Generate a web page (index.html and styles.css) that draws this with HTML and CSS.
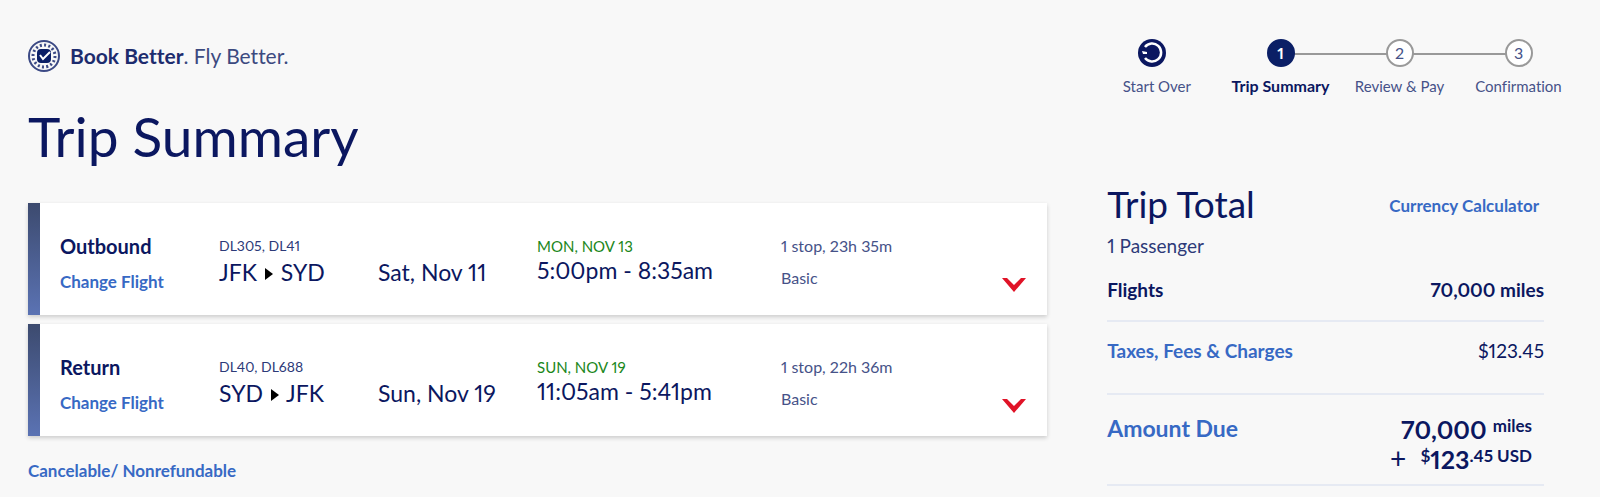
FILE: index.html
```html
<!DOCTYPE html>
<html lang="en">
<head>
    <meta charset="UTF-8">
    <meta name="viewport" content="width=device-width, initial-scale=1.0">
    <title>Trip Summary</title>
    <link rel="stylesheet" href="styles.css">
</head>
<body>
    <header class="top-bar">
        <div class="brand">
            <svg class="brand-icon" viewBox="0 0 32 32" aria-hidden="true">
                <circle cx="16" cy="16" r="15" fill="none" stroke="#3c4a85" stroke-width="2"/>
                <circle cx="16" cy="16" r="11" fill="none" stroke="#3c4a85" stroke-width="3" stroke-dasharray="2 2.3"/>
                <rect x="9" y="9" width="14" height="14" rx="4" fill="#0b1f66"/>
                <path d="M12 15l3 4 7-7" fill="none" stroke="#fff" stroke-width="2"/>
            </svg>
            <p class="brand-text"><b>Book Better</b>. Fly Better.</p>
        </div>

        <nav class="progress">
            <button class="start-over" type="button">
                <svg class="restart-icon" viewBox="0 0 28 28" aria-hidden="true">
                    <circle cx="14" cy="14" r="14" fill="#0b1760"/>
                    <path d="M7 8a9 9 0 1 1 0 11" fill="none" stroke="#fff" stroke-width="2.5"/>
                    <path d="M4 12l5 1v2l-4 0z" fill="#fff"/>
                </svg>
                <span>Start Over</span>
            </button>
            <ol class="steps">
                <li class="step active"><span class="dot">1</span>Trip Summary</li>
                <li class="step"><span class="dot">2</span>Review &amp; Pay</li>
                <li class="step"><span class="dot">3</span>Confirmation</li>
            </ol>
        </nav>
    </header>

    <div class="content">
        <main>
            <h1>Trip Summary</h1>

            <section class="flight">
                <div>
                    <h2>Outbound</h2>
                    <a class="change" href="#">Change Flight</a>
                </div>
                <div>
                    <p class="numbers">DL305, DL41</p>
                    <p class="large">JFK <svg class="arrow" viewBox="0 0 8 12" aria-hidden="true"><path d="M0 0l8 6-8 6z"/></svg> SYD</p>
                </div>
                <p class="large date">Sat, Nov 11</p>
                <div>
                    <p class="arrival">MON, NOV 13</p>
                    <p class="large">5:00pm - 8:35am</p>
                </div>
                <div class="details">
                    <p>1 stop, 23h 35m</p>
                    <p>Basic</p>
                </div>
                <button class="expand" type="button" aria-label="Show outbound details">
                    <svg viewBox="0 0 24 14" aria-hidden="true"><path d="M0 0h5l7 7 7-7h5L12 14z" fill="#e01327"/></svg>
                </button>
            </section>

            <section class="flight">
                <div>
                    <h2>Return</h2>
                    <a class="change" href="#">Change Flight</a>
                </div>
                <div>
                    <p class="numbers">DL40, DL688</p>
                    <p class="large">SYD <svg class="arrow" viewBox="0 0 8 12" aria-hidden="true"><path d="M0 0l8 6-8 6z"/></svg> JFK</p>
                </div>
                <p class="large date">Sun, Nov 19</p>
                <div>
                    <p class="arrival">SUN, NOV 19</p>
                    <p class="large">11:05am - 5:41pm</p>
                </div>
                <div class="details">
                    <p>1 stop, 22h 36m</p>
                    <p>Basic</p>
                </div>
                <button class="expand" type="button" aria-label="Show return details">
                    <svg viewBox="0 0 24 14" aria-hidden="true"><path d="M0 0h5l7 7 7-7h5L12 14z" fill="#e01327"/></svg>
                </button>
            </section>

            <a class="policy" href="#">Cancelable/ Nonrefundable</a>
        </main>

        <aside class="total">
            <div class="total-head">
                <h2>Trip Total</h2>
                <a href="#">Currency Calculator</a>
            </div>
            <p class="passengers">1 Passenger</p>
            <div class="row flights">
                <b>Flights</b>
                <b>70,000 miles</b>
            </div>
            <div class="row taxes">
                <a href="#">Taxes, Fees &amp; Charges</a>
                <span>$123.45</span>
            </div>
            <div class="row due">
                <a href="#">Amount Due</a>
                <div class="amount">
                    <p>70,000 <small>miles</small></p>
                    <p><span class="plus">+</span> <small>$</small>123<small>.45 USD</small></p>
                </div>
            </div>
        </aside>
    </div>
</body>
</html>
```
FILE: styles.css
```css
* {
    box-sizing: border-box;
}
body {
    margin: 0;
    background-color: #f8f8f8;
    color: #0b1760;
    font-family: Lato, "Open Sans", sans-serif;
    font-size: 17px;
    font-variant-ligatures: none;
    font-variant-numeric: proportional-nums;
    line-height: 20px;
}
h1, h2, p, ol {
    margin: 0;
    padding: 0;
}
a {
    color: #3769c4;
    font-weight: bold;
    text-decoration: none;
}
button {
    padding: 0;
    border: none;
    background: none;
    color: inherit;
    font: inherit;
    cursor: pointer;
}

/* Header */
.top-bar {
    display: flex;
    justify-content: space-between;
    padding: 39px 22px 0 28px;
}
.brand {
    display: flex;
    align-items: center;
    gap: 10px;
    height: 34px;
}
.brand-icon {
    width: 32px;
    height: 32px;
}
.brand-text {
    color: #3c4a80;
    font-size: 21px;
}
.brand-text b {
    color: #1d2c6e;
}
.progress {
    display: flex;
    color: #465288;
    font-size: 15px;
}
.start-over {
    display: flex;
    flex-direction: column;
    align-items: flex-start;
    gap: 9px;
    margin-right: 30px;
}
.restart-icon {
    width: 28px;
    height: 28px;
    margin-left: 15px;
}
.steps {
    display: flex;
    list-style: none;
}
.step {
    position: relative;
    display: flex;
    flex-direction: column;
    align-items: center;
    gap: 9px;
    width: 119px;
}
/* connector to the previous step */
.step + .step::before {
    content: "";
    position: absolute;
    top: 14px;
    right: 50%;
    width: 100%;
    height: 2px;
    background-color: #999;
}
.dot {
    position: relative;
    z-index: 1;
    width: 28px;
    height: 28px;
    border: 2px solid #999;
    border-radius: 50%;
    background-color: #fff;
    font-size: 16px;
    line-height: 24px;
    text-align: center;
}
.active {
    color: #0b1760;
    font-size: 16px;
    font-weight: bold;
}
.active .dot {
    border-color: #0b1f66;
    background-color: #0b1f66;
    color: #fff;
}

/* Flights */
.content {
    display: grid;
    grid-template-columns: 7fr 3fr;
    gap: 60px;
    padding: 4px 56px 0 28px;
}
h1 {
    margin-bottom: 31px;
    font-size: 55px;
    font-weight: normal;
    line-height: 72px;
}
.flight {
    display: grid;
    grid-template-columns: 159px 159px 159px 244px 1fr 24px;
    margin-bottom: 9px;
    padding: 33px 21px 23px 20px;
    border-left: 12px solid;
    border-image: linear-gradient(#3c4a6e, #5b73b4) 1;
    background-color: #fff;
    box-shadow: 0 2px 4px #ccc;
}
.flight h2 {
    margin-bottom: 16px;
    font-size: 20px;
    line-height: 20px;
}
.numbers {
    margin-bottom: 2px;
    color: #2d3a78;
    font-size: 14px;
}
.large {
    font-size: 23px;
    line-height: 28px;
}
.arrow {
    width: 8px;
    height: 12px;
    margin: 0 2px;
    vertical-align: 1px;
}
.date {
    margin-top: 22px;
}
.arrival {
    color: #1b871b;
    font-size: 15px;
}
.details {
    display: grid;
    align-content: start;
    gap: 12px;
    color: #465288;
    font-size: 16px;
}
.expand {
    align-self: end;
}
.expand svg {
    display: block;
    width: 24px;
    height: 14px;
}
.policy {
    display: inline-block;
    margin-top: 16px;
}

/* Trip total */
.total {
    font-size: 19px;
}
.total-head {
    display: flex;
    align-items: center;
    justify-content: space-between;
    margin-top: 82px;
    padding-right: 5px;
}
.total-head h2 {
    font-size: 37px;
    font-weight: normal;
    line-height: 44px;
}
.total-head a {
    padding-top: 4px;
    font-size: 17px;
}
.passengers {
    margin-top: 10px;
    color: #2d3a78;
}
.row {
    display: flex;
    justify-content: space-between;
    border-bottom: 2px solid #e6eaf3;
}
.flights {
    padding: 24px 0 20px;
}
.taxes {
    padding: 19px 0 32px;
}
.due {
    padding: 19px 12px 10px 0;
}
.due a {
    font-size: 23px;
    line-height: 28px;
}
.amount {
    font-size: 25px;
    font-weight: bold;
    line-height: 30px;
    text-align: right;
}
.amount small {
    font-size: 17px;
    line-height: 17px;
    vertical-align: 7px;
}
.plus {
    margin-right: 8px;
    font-size: 28px;
    font-weight: normal;
    line-height: 28px;
}
```
